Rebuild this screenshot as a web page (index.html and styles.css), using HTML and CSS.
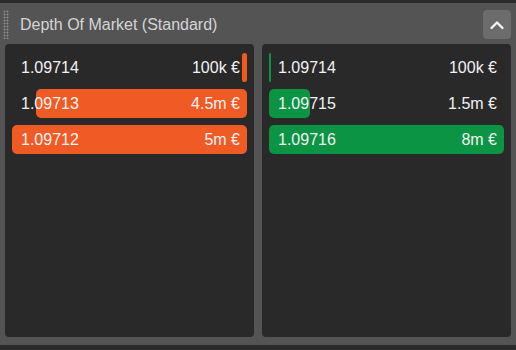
FILE: index.html
```html
<!DOCTYPE html>
<html lang="en">
<head>
<meta charset="UTF-8" />
<title>Depth Of Market</title>
<link rel="stylesheet" href="styles.css">
</head>
<body>
	<div class="widget">
		<div class="header">
			<span class="grip"></span>
			<span class="title">Depth Of Market (Standard)</span>
			<button class="collapse">
				<svg width="16" height="10" viewBox="0 0 16 10"><polyline points="2.5,8 8,2.5 13.5,8" fill="none" stroke="#f4f4f4" stroke-width="2.4" stroke-linecap="round" stroke-linejoin="round"/></svg>
			</button>
		</div>
		<div class="books">
			<div class="book asks">
				<div class="row"><span class="bar" style="width:5px"></span><span class="price">1.09714</span><span class="size">100k €</span></div>
				<div class="row"><span class="bar" style="width:211px"></span><span class="price">1.09713</span><span class="size">4.5m €</span></div>
				<div class="row"><span class="bar" style="width:100%"></span><span class="price">1.09712</span><span class="size">5m €</span></div>
			</div>
			<div class="book bids">
				<div class="row"><span class="bar" style="width:2px"></span><span class="price">1.09714</span><span class="size">100k €</span></div>
				<div class="row"><span class="bar" style="width:41px"></span><span class="price">1.09715</span><span class="size">1.5m €</span></div>
				<div class="row"><span class="bar" style="width:100%"></span><span class="price">1.09716</span><span class="size">8m €</span></div>
			</div>
		</div>
	</div>
</body>
</html>
```

FILE: styles.css
```css
body {
	margin: 0;
	background-color: #2a2a2a;
	font-family: "Liberation Sans", Arial, sans-serif;
}

.widget {
	margin-top: 3px;
	height: 342px;
	background-color: #545454;
}

.header {
	height: 41px;
	display: flex;
	align-items: center;
}

.grip {
	width: 6px;
	height: 29px;
	margin-left: 3px;
	margin-top: 1px;
	background-image: radial-gradient(circle, #8a8a8a 0.9px, transparent 1.1px);
	background-size: 3px 3px;
}

.title {
	margin-left: 11px;
	margin-top: 3px;
	color: #d4d4d4;
	font-size: 16px;
}

.collapse {
	margin-left: auto;
	margin-right: 5px;
	margin-top: 2px;
	width: 28px;
	height: 29px;
	border: none;
	border-radius: 4px;
	background-color: #6c6c6c;
	display: flex;
	align-items: center;
	justify-content: center;
	padding: 0;
}

.books {
	display: grid;
	grid-template-columns: 1fr 1fr;
	gap: 8px;
	padding: 0 5px;
	height: 293px;
}

.book {
	background-color: #292929;
	border-radius: 4px;
	padding: 9px 7px;
	display: flex;
	flex-direction: column;
	gap: 7px;
}

.row {
	position: relative;
	height: 29px;
	display: flex;
	align-items: center;
	justify-content: space-between;
	padding: 0 7px 0 9px;
	color: #f2f2f2;
	font-size: 16px;
}

.row span.price, .row span.size {
	position: relative;
}

.bar {
	position: absolute;
	top: 0;
	bottom: 0;
	border-radius: 5px;
}

.asks .bar {
	right: 0;
	background-color: #ef5a25;
}

.bids .bar {
	left: 0;
	background-color: #0b9444;
}

.bids .row:first-child .bar {
	border-radius: 1px;
}
```
